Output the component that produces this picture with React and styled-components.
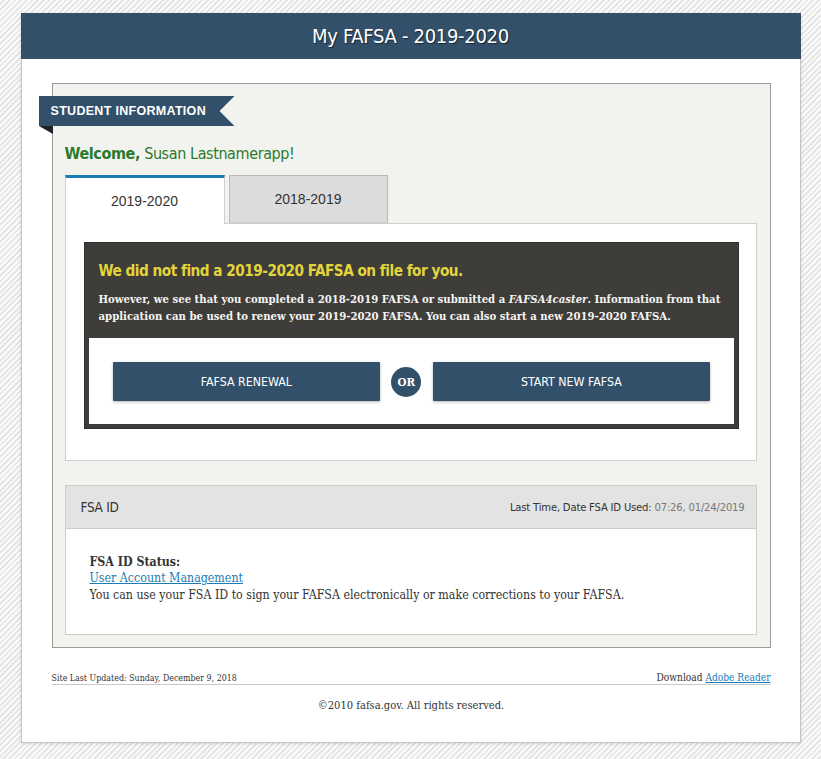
import React from "react";
import styled, { createGlobalStyle } from "styled-components";

const COND = `"DejaVu Sans Condensed", "Roboto", sans-serif`;
const SERIF = `"DejaVu Serif Condensed", "DejaVu Serif", "Liberation Serif", serif`;
const SANS = `"Liberation Sans", Arial, sans-serif`;

const Global = createGlobalStyle`
  html, body { margin: 0; padding: 0; }
  body {
    background-color: #f0f0f0;
    background-image: repeating-linear-gradient(135deg, #fbfbfb 0 2px, #e6e6e6 2px 4px);
    min-height: 759px;
    font-family: ${SERIF};
    color: #333;
  }
`;

const Page = styled.div`
  padding: 13px 0 16px;
`;

const Container = styled.div`
  width: 778px;
  margin: 0 auto;
  background: #fff;
  border: 1px solid #c4c4c4;
  border-top: none;
  box-shadow: 0 1px 3px rgba(0, 0, 0, 0.12);
`;

const Header = styled.header`
  height: 46px;
  background: #33506a;
  display: flex;
  align-items: center;
  justify-content: center;
  margin: 0 -1px;
`;

const Title = styled.h1`
  margin: 0;
  font-family: ${COND};
  font-weight: normal;
  font-size: 20px;
  letter-spacing: -0.3px;
  color: #fff;
  text-shadow: 1px 1px 1px rgba(0, 0, 0, 0.55);
`;

const Body = styled.div`
  padding: 24px 29px 0 30px;
`;

const Panel = styled.section`
  background: #f2f2ee;
  border: 1px solid #9a9a9a;
  padding: 12px 13px 12px 12px;
`;

const RibbonWrap = styled.div`
  position: relative;
  margin-left: -26px;
  width: 196px;
  height: 30px;
`;

const RibbonBody = styled.div`
  height: 30px;
  background: #33506a;
  clip-path: polygon(0 0, 100% 0, calc(100% - 15px) 50%, 100% 100%, 0 100%);
  display: flex;
  align-items: center;
  padding-left: 12px;
  font-family: ${SANS};
  font-weight: bold;
  font-size: 12.5px;
  letter-spacing: 0.3px;
  color: #fff;
`;

const Fold = styled.div`
  position: absolute;
  left: 0;
  top: 30px;
  width: 0;
  height: 0;
  border-top: 8px solid #1d2328;
  border-left: 14px solid transparent;
`;

const Welcome = styled.p`
  margin: 17px 0 10px;
  font-family: ${COND};
  font-size: 16px;
  letter-spacing: -0.4px;
  color: #2b7a2b;
  line-height: 22px;
  b { font-weight: bold; }
`;

const Tabs = styled.div`
  display: flex;
  gap: 4px;
  margin-bottom: -1px;
  position: relative;
`;

const Tab = styled.div`
  width: ${(p) => (p.$active ? 160 : 159)}px;
  height: ${(p) => (p.$active ? 49 : 48)}px;
  box-sizing: border-box;
  display: flex;
  align-items: center;
  justify-content: center;
  font-family: ${SANS};
  font-size: 14px;
  color: #333;
  background: ${(p) => (p.$active ? "#fff" : "#dcdcdc")};
  border: 1px solid ${(p) => (p.$active ? "#cfcfcf" : "#b9b9b9")};
  border-top: ${(p) => (p.$active ? "3px solid #1b7bb5" : "1px solid #b9b9b9")};
  border-bottom: ${(p) => (p.$active ? "none" : "1px solid #cfcfcf")};
`;

const TabPanel = styled.div`
  background: #fff;
  border: 1px solid #cfcfcf;
  padding: 18px 17px 31px 18px;
`;

const Notice = styled.div`
  background: #3e3d39;
  border: 1px dotted #222;
  padding: 0 4px 4px;
`;

const NoticeText = styled.div`
  padding: 17px 10px 13px;
`;

const NoticeTitle = styled.h2`
  margin: 0 0 9px;
  font-family: ${COND};
  font-size: 15.2px;
  letter-spacing: -0.5px;
  font-weight: bold;
  color: #e3d43c;
  line-height: 22px;
`;

const NoticeP = styled.p`
  margin: 0;
  font-family: ${SERIF};
  font-weight: bold;
  font-size: 11.25px;
  line-height: 17px;
  color: #f4f4f4;
  i { font-style: italic; }
`;

const Actions = styled.div`
  background: #fff;
  display: flex;
  align-items: center;
  padding: 24px 24px 23px;
`;

const ActionButton = styled.button`
  flex: ${(p) => p.$w} 0 0;
  height: 39px;
  border: none;
  border-radius: 1px;
  background: #33506a;
  color: #fff;
  font-family: ${COND};
  font-size: 12.3px;
  text-transform: uppercase;
  box-shadow: 0 1px 3px rgba(0, 0, 0, 0.3);
  cursor: pointer;
`;

const Or = styled.div`
  width: 30px;
  height: 30px;
  margin: 0 12px 0 11px;
  border-radius: 50%;
  background: #33506a;
  color: #fff;
  display: flex;
  align-items: center;
  justify-content: center;
  font-family: ${SERIF};
  font-weight: bold;
  font-size: 11.5px;
  flex: none;
`;

const Card = styled.section`
  margin-top: 24px;
  border: 1px solid #cdcdcd;
  background: #fff;
`;

const CardHead = styled.div`
  height: 42px;
  background: #e3e3e3;
  border-bottom: 1px solid #cdcdcd;
  display: flex;
  align-items: center;
  justify-content: space-between;
  padding: 0 11px 0 15px;
  font-family: ${COND};
  color: #333;
`;

const CardTitle = styled.h3`
  margin: 0;
  font-weight: normal;
  font-size: 13.5px;
  letter-spacing: -0.3px;
`;

const LastUsed = styled.div`
  font-size: 11.2px;
  letter-spacing: -0.2px;
  span { color: #777; }
`;

const CardBody = styled.div`
  padding: 24px 24px 30px;
  font-family: ${SERIF};
  font-size: 12.3px;
  line-height: 17px;
  color: #333;
`;

const Strong = styled.div`
  font-weight: bold;
`;

const Link = styled.a`
  color: #1b7bb5;
  text-decoration: underline;
  display: block;
`;

const Footer = styled.footer`
  padding: 24px 29px 0 30px;
`;

const FootRow = styled.div`
  display: flex;
  justify-content: space-between;
  align-items: flex-end;
  border-bottom: 1px solid #c8c8c8;
  padding-bottom: 1px;
  font-family: ${SERIF};
  color: #333;
  a { color: #1b7bb5; }
`;

const FootNote = styled.span`
  font-size: ${(p) => p.$size}px;
`;

const Copy = styled.p`
  margin: 0;
  padding: 14px 0 30px;
  text-align: center;
  font-family: ${SERIF};
  font-size: 11.1px;
  color: #333;
`;

export default function App() {
  return (
    <>
      <Global />
      <Page>
        <Container>
          <Header>
            <Title>My FAFSA - 2019-2020</Title>
          </Header>
          <Body>
            <Panel>
              <RibbonWrap>
                <RibbonBody>STUDENT INFORMATION</RibbonBody>
                <Fold />
              </RibbonWrap>
              <Welcome>
                <b>Welcome,</b> Susan Lastnamerapp!
              </Welcome>
              <Tabs>
                <Tab $active>2019-2020</Tab>
                <Tab>2018-2019</Tab>
              </Tabs>
              <TabPanel>
                <Notice>
                  <NoticeText>
                    <NoticeTitle>We did not find a 2019-2020 FAFSA on file for you.</NoticeTitle>
                    <NoticeP>
                      However, we see that you completed a 2018-2019 FAFSA or submitted a{" "}
                      <i>FAFSA4caster</i>. Information from that application can be used to
                      renew your 2019-2020 FAFSA. You can also start a new 2019-2020 FAFSA.
                    </NoticeP>
                  </NoticeText>
                  <Actions>
                    <ActionButton $w={267}>FAFSA Renewal</ActionButton>
                    <Or>OR</Or>
                    <ActionButton $w={276}>Start New FAFSA</ActionButton>
                  </Actions>
                </Notice>
              </TabPanel>
              <Card>
                <CardHead>
                  <CardTitle>FSA ID</CardTitle>
                  <LastUsed>
                    Last Time, Date FSA ID Used: <span>07:26, 01/24/2019</span>
                  </LastUsed>
                </CardHead>
                <CardBody>
                  <Strong>FSA ID Status:</Strong>
                  <Link href="#">User Account Management</Link>
                  You can use your FSA ID to sign your FAFSA electronically or make corrections
                  to your FAFSA.
                </CardBody>
              </Card>
            </Panel>
          </Body>
          <Footer>
            <FootRow>
              <FootNote $size={8.8}>Site Last Updated: Sunday, December 9, 2018</FootNote>
              <FootNote $size={10.1}>
                Download <a href="#">Adobe Reader</a>
              </FootNote>
            </FootRow>
            <Copy>©2010 fafsa.gov. All rights reserved.</Copy>
          </Footer>
        </Container>
      </Page>
    </>
  );
}
